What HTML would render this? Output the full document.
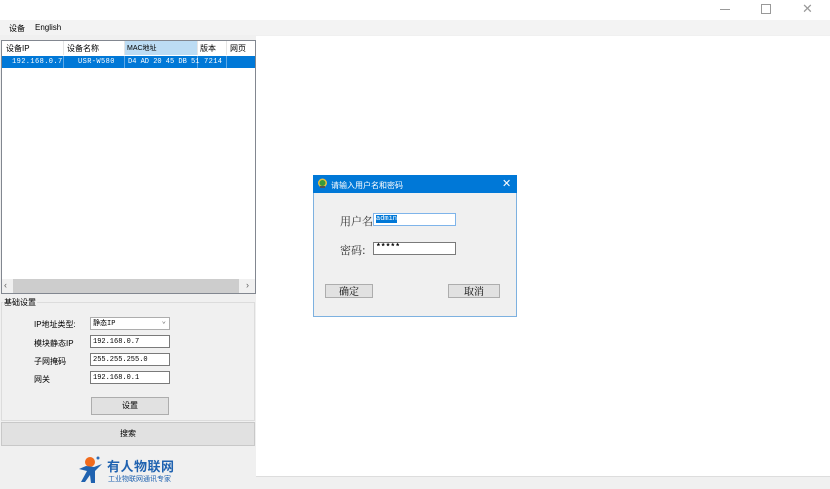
<!DOCTYPE html>
<html><head><meta charset="utf-8"><style>
*{margin:0;padding:0;box-sizing:border-box}
body{width:830px;height:489px;background:#f0f0f0;position:relative;overflow:hidden;font-family:"Liberation Sans","Noto Sans CJK SC",sans-serif;font-size:8px;color:#000}
.a{position:absolute}
.inp{position:absolute;background:#fff;border:1px solid #7a7a7a;font-family:"Liberation Mono","Noto Sans CJK SC",monospace;font-size:7px;padding:2px 2px;line-height:9px}
.btn{position:absolute;background:#e1e1e1;border:1px solid #adadad;text-align:center}
.m{font-family:'Liberation Mono',monospace;font-size:7px;color:#fff;letter-spacing:0.4px}
</style></head><body>
<div class="a" style="left:0;top:0;width:830px;height:20px;background:#fff"></div>
<div class="a" style="left:720px;top:9px;width:10px;height:1px;background:#999"></div>
<div class="a" style="left:761px;top:4px;width:10px;height:10px;border:1px solid #999"></div>
<div class="a" style="left:802px;top:0px;font-size:13px;color:#999;line-height:18px">✕</div>
<div class="a" style="left:0;top:20px;width:830px;height:15px;background:#f3f3f3"></div>
<div class="a" style="left:9px;top:23px;font-size:8px">设备</div>
<div class="a" style="left:35px;top:23px;font-size:8px">English</div>
<div class="a" style="left:256px;top:36px;width:574px;height:441px;background:#fff;border-bottom:1px solid #ddd"></div>
<!-- table -->
<div class="a" style="left:1px;top:40px;width:255px;height:254px;background:#fff;border:1px solid #828790"></div>
<div class="a" style="left:2px;top:41px;width:253px;height:14px;background:#fff"></div>
<div class="a" style="left:125px;top:41px;width:72px;height:14px;background:#bcdcf4"></div>
<div class="a" style="left:63px;top:41px;width:1px;height:14px;background:#e5e5e5"></div>
<div class="a" style="left:124px;top:41px;width:1px;height:14px;background:#e5e5e5"></div>
<div class="a" style="left:197px;top:41px;width:1px;height:14px;background:#e5e5e5"></div>
<div class="a" style="left:226px;top:41px;width:1px;height:14px;background:#e5e5e5"></div>
<div class="a" style="left:6px;top:43px">设备IP</div>
<div class="a" style="left:67px;top:43px">设备名称</div>
<div class="a" style="left:127px;top:43px;font-size:7px">MAC地址</div>
<div class="a" style="left:200px;top:43px">版本</div>
<div class="a" style="left:230px;top:43px">网页</div>
<div class="a" style="left:2px;top:56px;width:253px;height:12px;background:#0078d7"></div>
<div class="a" style="left:63px;top:56px;width:1px;height:12px;background:#5fa8e6"></div>
<div class="a" style="left:124px;top:56px;width:1px;height:12px;background:#5fa8e6"></div>
<div class="a" style="left:197px;top:56px;width:1px;height:12px;background:#5fa8e6"></div>
<div class="a" style="left:226px;top:56px;width:1px;height:12px;background:#5fa8e6"></div>
<div class="a m" style="left:12px;top:58px">192.168.0.7</div>
<div class="a m" style="left:78px;top:58px">USR-W580</div>
<div class="a m" style="left:128px;top:58px;letter-spacing:0">D4 AD 20 45 DB 51</div>
<div class="a m" style="left:204px;top:58px">7214</div>
<div class="a" style="left:2px;top:279px;width:253px;height:14px;background:#f0f0f0"></div>
<div class="a" style="left:13px;top:279px;width:226px;height:14px;background:#cdcdcd"></div>
<div class="a" style="left:4px;top:280px;font-size:9px;color:#606060">‹</div>
<div class="a" style="left:246px;top:280px;font-size:9px;color:#606060">›</div>
<!-- group -->
<div class="a" style="left:1px;top:302px;width:254px;height:119px;border:1px solid #dcdcdc"></div>
<div class="a" style="left:3px;top:297px;background:#f0f0f0;padding:0 1px">基础设置</div>
<div class="a" style="left:34px;top:319px">IP地址类型:</div>
<div class="a" style="left:34px;top:338px">模块静态IP</div>
<div class="a" style="left:34px;top:356px">子网掩码</div>
<div class="a" style="left:34px;top:374px">网关</div>
<div class="inp" style="left:90px;top:317px;width:80px;height:13px;border-color:#adadad">静态IP<span style="position:absolute;right:3px;top:0;color:#555">⌄</span></div>
<div class="inp" style="left:90px;top:335px;width:80px;height:13px">192.168.0.7</div>
<div class="inp" style="left:90px;top:353px;width:80px;height:13px">255.255.255.0</div>
<div class="inp" style="left:90px;top:371px;width:80px;height:13px">192.168.0.1</div>
<div class="btn" style="left:91px;top:397px;width:78px;height:18px;line-height:16px">设置</div>
<div class="btn" style="left:1px;top:422px;width:254px;height:24px;line-height:22px;background:#e1e1e1;border-color:#c8c8c8">搜索</div>
<!-- logo -->
<svg class="a" style="left:78px;top:455px" width="28" height="30" viewBox="0 0 28 30">
<circle cx="12" cy="7" r="5" fill="#f06a1c"/>
<circle cx="20" cy="3" r="1.5" fill="#2b6cb8"/>
<path d="M1 14 L8 11 L16 12 L24 9 L17 16 L17 28 L13 28 L12 20 L7 27 L3 27 L9 16 Z" fill="#1f62b0"/>
</svg>
<div class="a" style="left:107px;top:456px;font-size:13px;font-weight:bold;color:#1f62b0;letter-spacing:0.5px">有人物联网</div>
<div class="a" style="left:108px;top:474px;font-size:7px;color:#1f62b0">工业物联网通讯专家</div>
<!-- dialog -->
<div class="a" style="left:313px;top:175px;width:204px;height:142px;background:#f0f0f0;border:1px solid #7db1e0"></div>
<div class="a" style="left:313px;top:175px;width:204px;height:18px;background:#0078d7"></div>
<svg class="a" style="left:317px;top:178px" width="11" height="11"><circle cx="5.5" cy="5" r="4.5" fill="#e8c040"/><circle cx="5.5" cy="5" r="3" fill="#3a9a3a"/><rect x="3" y="8" width="5" height="2" fill="#555"/></svg>
<div class="a" style="left:331px;top:180px;color:#fff;font-size:8px">请输入用户名和密码</div>
<div class="a" style="left:502px;top:177px;color:#fff;font-size:11px">✕</div>
<div class="a" style="left:340px;top:213px;font-family:'Noto Serif CJK SC',serif;font-size:11px;color:#333">用户名</div>
<div class="inp" style="left:373px;top:213px;width:83px;height:13px;border-color:#7eb4ea;padding-top:1px"><span style="background:#0078d7;color:#fff">admin</span></div>
<div class="a" style="left:340px;top:242px;font-family:'Noto Serif CJK SC',serif;font-size:11px;color:#333">密码:</div>
<div class="inp" style="left:373px;top:242px;width:83px;height:13px;padding-top:0;font-weight:bold;font-size:8px">*****</div>
<div class="btn" style="left:325px;top:284px;width:48px;height:14px;line-height:12px;font-family:'Noto Serif CJK SC',serif;font-size:10px">确定</div>
<div class="btn" style="left:448px;top:284px;width:52px;height:14px;line-height:12px;font-family:'Noto Serif CJK SC',serif;font-size:10px">取消</div>
</body></html>
